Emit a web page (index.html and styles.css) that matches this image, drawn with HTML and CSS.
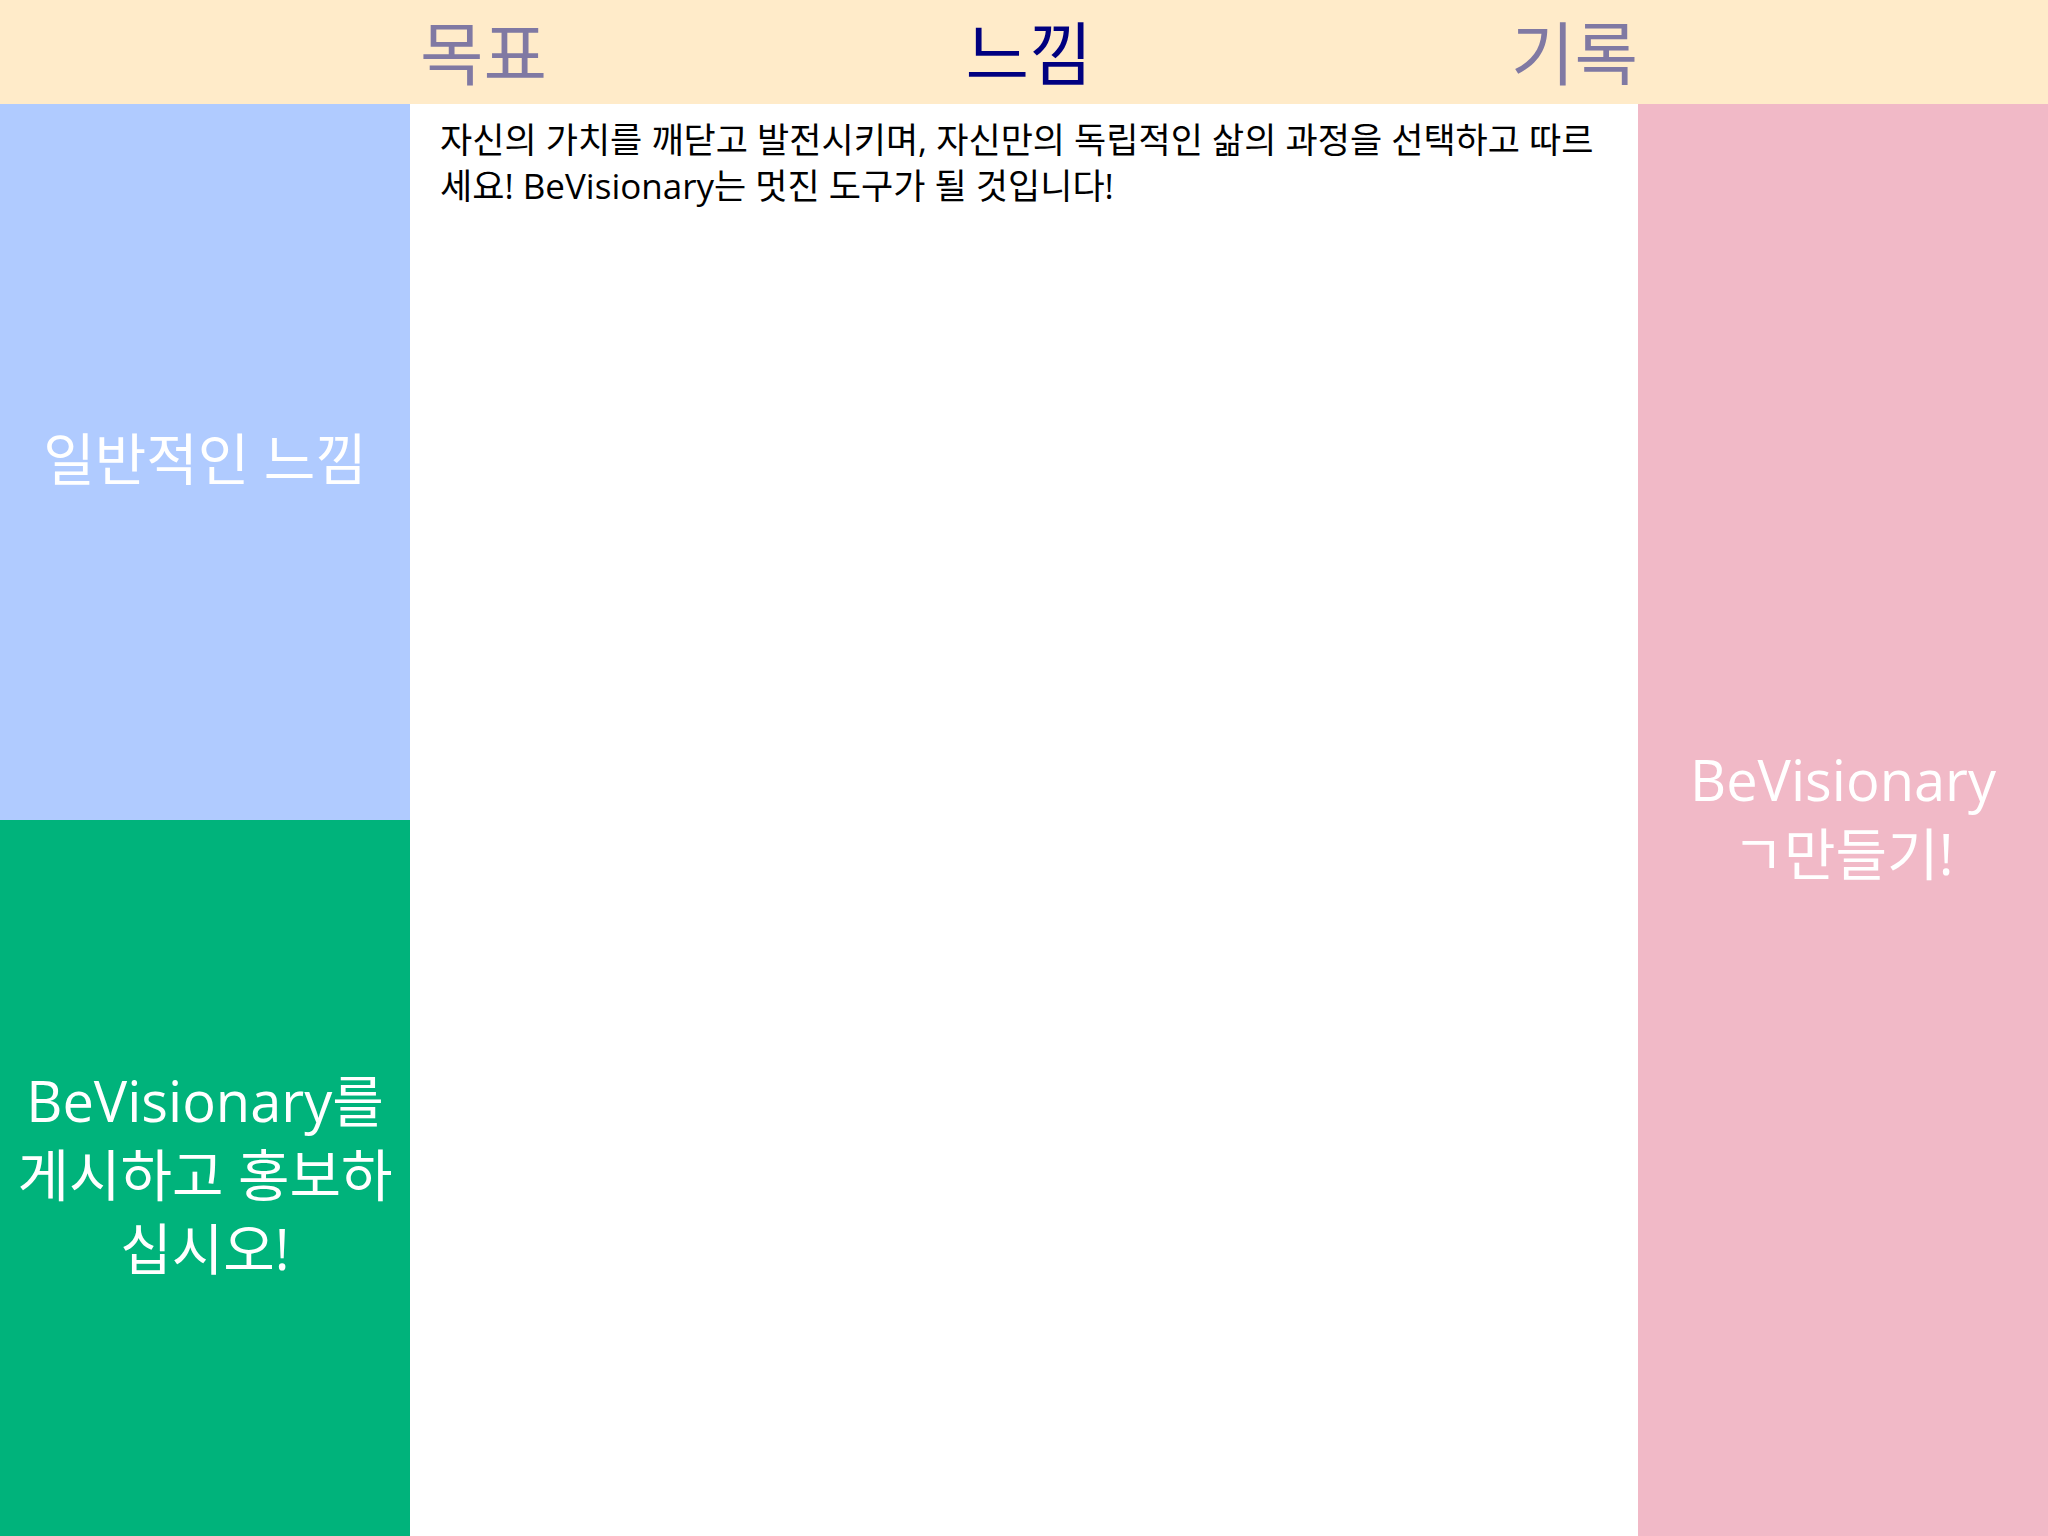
FILE: index.html
```html
<!DOCTYPE html>
<html lang="ko">
<head>
<meta charset="utf-8">
<title>BeVisionary</title>
<link rel="stylesheet" href="styles.css">
</head>
<body>
<div class="page">
  <header class="topbar">
    <div class="spacer"></div>
    <nav class="tabs">
      <a class="tab">목표</a>
      <a class="tab active">느낌</a>
      <a class="tab">기록</a>
    </nav>
    <div class="spacer"></div>
  </header>
  <main class="layout">
    <aside class="left">
      <div class="panel blue">일반적인 느낌</div>
      <div class="panel green">BeVisionary를 게시하고 홍보하십시오!</div>
    </aside>
    <section class="content">
      <p class="intro">자신의 가치를 깨닫고 발전시키며, 자신만의 독립적인 삶의 과정을 선택하고 따르세요! BeVisionary는 멋진 도구가 될 것입니다!</p>
    </section>
    <aside class="right">
      <div class="panel pink">BeVisionary<br>ㄱ만들기!</div>
    </aside>
  </main>
</div>
</body>
</html>
```

FILE: styles.css
```css
html, body {
  margin: 0;
  padding: 0;
}
body {
  font-family: "Open Sans", "Noto Sans CJK KR", sans-serif;
  background: #ffffff;
  color: #000;
}
.page {
  width: 2048px;
  height: 1536px;
  display: flex;
  flex-direction: column;
}
.topbar {
  height: 104px;
  flex: none;
  background: #ffebc9;
  display: grid;
  grid-template-columns: 410px 1fr 410px;
}
.tabs {
  display: flex;
  justify-content: space-between;
  align-items: flex-start;
  padding: 0 0 0 10px;
}
.tab {
  font-family: "Noto Sans CJK KR", sans-serif;
  font-size: 69px;
  line-height: 100px;
  color: #8079a3;
}
.tab.active {
  color: #000080;
}
.layout {
  flex: 1;
  display: grid;
  grid-template-columns: 410px 1fr 410px;
}
.left {
  display: flex;
  flex-direction: column;
}
.right {
  display: flex;
}
.panel {
  flex: 1;
  display: flex;
  align-items: center;
  justify-content: center;
  text-align: center;
  color: #ffffff;
  font-size: 56px;
  line-height: 74px;
  padding: 0 0 8px;
}
.blue { background: #b0cbff; }
.green { background: #00b37b; }
.pink { background: #f1b9c7; }
.content {
  background: #ffffff;
  padding: 13px 30px 14px 30px;
}
.intro {
  margin: 0;
  font-size: 35px;
  line-height: 46px;
  color: #000;
}
```
